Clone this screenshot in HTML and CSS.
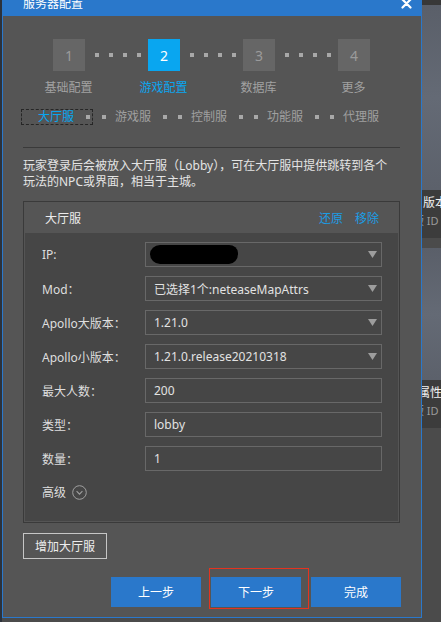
FILE: index.html
```html
<!DOCTYPE html>
<html lang="zh-CN">
<head>
<meta charset="utf-8">
<title>服务器配置</title>
<link rel="stylesheet" href="styles.css">
</head>
<body>
<div class="screen">
  <div class="left-edge"></div>
  <div class="dialog">
    <div class="titlebar">
      <span class="title">服务器配置</span>
      <svg class="close" width="11" height="11" viewBox="0 0 11 11"><path d="M1.5 1.5 L9.5 9.5 M9.5 1.5 L1.5 9.5" stroke="#fff" stroke-width="2.2" stroke-linecap="round"/></svg>
    </div>

    <div class="steps">
      <div class="sq">1</div>
      <div class="dots"><i></i><i></i><i></i><i></i></div>
      <div class="sq on">2</div>
      <div class="dots"><i></i><i></i><i></i><i></i></div>
      <div class="sq">3</div>
      <div class="dots"><i></i><i></i><i></i><i></i></div>
      <div class="sq">4</div>
    </div>
    <div class="step-labels">
      <span>基础配置</span>
      <span class="on">游戏配置</span>
      <span>数据库</span>
      <span>更多</span>
    </div>

    <div class="subs">
      <div class="sub-active"><span>大厅服</span><i class="d a"></i></div>
      <i class="d c"></i>
      <span class="st">游戏服</span><i class="d a"></i><i class="d b"></i>
      <span class="st">控制服</span><i class="d a"></i><i class="d b"></i>
      <span class="st">功能服</span><i class="d a"></i><i class="d b"></i>
      <span class="st">代理服</span>
    </div>

    <div class="sep"></div>

    <div class="content">
      <p class="desc">玩家登录后会被放入大厅服（Lobby），可在大厅服中提供跳转到各个玩法的NPC或界面，相当于主城。</p>

      <div class="panel">
        <div class="panel-head">
          <span>大厅服</span>
          <div class="links"><span>还原</span><span>移除</span></div>
        </div>
        <div class="panel-body">
          <div class="row"><span class="lab">IP:</span><div class="field"><span class="redact"></span><svg class="arrow" width="9" height="7" viewBox="0 0 9 7"><path d="M0 0 H9 L4.5 7 Z" fill="#9d9d9d"/></svg></div></div>
          <div class="row"><span class="lab">Mod：</span><div class="field"><span>已选择1个:neteaseMapAttrs</span><svg class="arrow" width="9" height="7" viewBox="0 0 9 7"><path d="M0 0 H9 L4.5 7 Z" fill="#9d9d9d"/></svg></div></div>
          <div class="row"><span class="lab">Apollo大版本：</span><div class="field"><span>1.21.0</span><svg class="arrow" width="9" height="7" viewBox="0 0 9 7"><path d="M0 0 H9 L4.5 7 Z" fill="#9d9d9d"/></svg></div></div>
          <div class="row"><span class="lab">Apollo小版本：</span><div class="field"><span>1.21.0.release20210318</span><svg class="arrow" width="9" height="7" viewBox="0 0 9 7"><path d="M0 0 H9 L4.5 7 Z" fill="#9d9d9d"/></svg></div></div>
          <div class="row"><span class="lab">最大人数：</span><div class="field"><span>200</span></div></div>
          <div class="row"><span class="lab">类型：</span><div class="field"><span>lobby</span></div></div>
          <div class="row"><span class="lab">数量：</span><div class="field"><span>1</span></div></div>
          <div class="adv"><span>高级</span><svg width="15" height="15" viewBox="0 0 15 15"><circle cx="7.5" cy="7.5" r="6.8" fill="none" stroke="#a0a0a0" stroke-width="1"/><path d="M4.6 6.2 L7.5 9.1 L10.4 6.2" fill="none" stroke="#a0a0a0" stroke-width="1.1"/></svg></div>
        </div>
      </div>

      <div class="add">增加大厅服</div>

      <div class="footer">
        <div class="btn">上一步</div>
        <div class="btn next">下一步<span class="mark"></span></div>
        <div class="btn">完成</div>
      </div>
    </div>
  </div>
  <div class="right">
    <div class="r-top"></div>
    <div class="thumb t1"></div>
    <div class="band"><div class="bt">版本</div><div class="bi">版 ID 8</div></div>
    <div class="r-gap"></div>
    <div class="thumb t2"></div>
    <div class="band"><div class="bt b2">属性</div><div class="bi">版 ID 9</div></div>
  </div>
</div>
</body>
</html>
```

FILE: styles.css
```css
* { box-sizing: border-box; }
html, body { margin: 0; padding: 0; }
body {
  width: 441px;
  height: 622px;
  overflow: hidden;
  background: #4b4b4b;
  font-family: "Noto Sans", "Noto Sans CJK SC", sans-serif;
  font-size: 12px;
}
.screen {
  display: flex;
  align-items: flex-start;
  width: 441px;
  height: 622px;
  overflow: hidden;
}
.left-edge {
  width: 2px;
  height: 622px;
  flex: none;
  background: #2c323b;
}
.dialog {
  width: 420px;
  flex: none;
  margin-top: -14px;
  background: #555555;
  border: 1px solid #2a78cb;
  border-top: none;
  padding-bottom: 10px;
  display: flex;
  flex-direction: column;
}
.titlebar {
  height: 30px;
  margin: 0 -1px;
  background: #2a78cb;
  display: flex;
  align-items: flex-start;
  padding: 10px 10px 0 21px;
  color: #fff;
  line-height: 16px;
}
.title { font-size: 12px; }
.close { margin-left: auto; margin-top: 2px; }

.steps {
  display: flex;
  align-items: center;
  margin-top: 23px;
  padding-left: 50px;
}
.sq {
  width: 32px;
  height: 32px;
  flex: none;
  background: #666666;
  color: #9b9b9b;
  font-size: 14px;
  display: flex;
  align-items: center;
  justify-content: center;
}
.sq.on { background: #09a6f0; color: #fff; }
.dots {
  width: 63px;
  flex: none;
  display: flex;
  gap: 10px;
  padding-left: 10px;
}
.dots i { width: 4px; height: 4px; background: #a8a8a8; }

.step-labels {
  display: grid;
  grid-template-columns: repeat(4, 95px);
  padding-left: 18px;
  margin-top: 9px;
  line-height: 16px;
  color: #a2a2a2;
  text-align: center;
}
.step-labels .on { color: #09a6f0; }

.subs {
  display: flex;
  align-items: center;
  height: 16px;
  margin-top: 13px;
  padding-left: 18px;
  color: #a0a0a0;
  line-height: 14px;
}
.sub-active {
  display: flex;
  align-items: center;
  height: 16px;
  border: 1px dashed #262626;
  padding: 0 2px 0 16px;
  color: #09a6f0;
}
.d { width: 4px; height: 4px; flex: none; background: #a8a8a8; }
.d.a { margin-left: 12px; }
.d.b { margin-left: 11px; }
.d.c { margin-left: 9px; }
.st { margin-left: 9px; }

.sep {
  height: 1px;
  margin: 22px 21px 0 20px;
  background: #3a3a3a;
}

.content {
  padding: 0 21px 0 20px;
  display: flex;
  flex-direction: column;
}
.desc {
  margin: 10px 0 0;
  padding-right: 12px;
  line-height: 16px;
  color: #e4e4e4;
}
.panel {
  margin-top: 11px;
  border: 1px solid #3a3a3a;
  padding: 1px;
}
.panel-head {
  height: 30px;
  display: flex;
  align-items: center;
  padding: 0 19px 0 20px;
  color: #ececec;
}
.links {
  margin-left: auto;
  display: flex;
  gap: 12px;
  color: #1b9de6;
}
.panel-body {
  background: #464646;
  padding: 9px 16px 21px 17px;
  display: flex;
  flex-direction: column;
  gap: 9px;
}
.row {
  display: flex;
  align-items: center;
  height: 25px;
}
.lab {
  width: 103px;
  flex: none;
  color: #dedede;
}
.field {
  flex: 1;
  height: 25px;
  border: 1px solid #686868;
  display: flex;
  align-items: center;
  padding: 0 4px 0 8px;
  color: #e2e2e2;
}
.arrow { margin-left: auto; }
.redact {
  width: 88px;
  height: 19px;
  margin-left: -4px;
  background: #000;
  border-radius: 10px 9px 9px 10px / 9px 8px 10px 10px;
}
.adv {
  display: flex;
  align-items: center;
  height: 16px;
  margin-top: 4px;
  color: #dedede;
}
.adv svg { margin-left: 6px; }

.add {
  margin-top: 10px;
  align-self: flex-start;
  width: 84px;
  height: 26px;
  border: 1px solid #c6c6c6;
  color: #ededed;
  display: flex;
  align-items: center;
  justify-content: center;
}
.footer {
  margin-top: 18px;
  margin-right: -1px;
  display: flex;
  justify-content: flex-end;
  gap: 10px;
}
.btn {
  width: 90px;
  height: 30px;
  background: #2a78cb;
  color: #fff;
  display: flex;
  align-items: center;
  justify-content: center;
}
.next { position: relative; }
.mark {
  position: absolute;
  left: -2px;
  top: -9px;
  width: 100px;
  height: 41px;
  border: 1px solid #e5331f;
}

.right {
  width: 19px;
  flex: none;
  height: 622px;
  overflow: hidden;
  background: #4b4b4b;
  display: flex;
  flex-direction: column;
}
.r-top { height: 5px; background: #383838; flex: none; }
.thumb { flex: none; background: linear-gradient(180deg, #5a5f69, #646a75 50%, #5c616b); }
.t1 { height: 185px; }
.t2 { height: 132px; }
.r-gap { height: 10px; flex: none; background: #4b4b4b; }
.band {
  height: 48px;
  flex: none;
  background: #3c3c3c;
  padding-top: 5px;
  white-space: nowrap;
}
.bt { color: #f2f2f2; line-height: 16px; margin-left: 1px; font-size: 12px; }
.bt.b2 { margin-left: -4px; }
.bi { color: #9a9a9a; line-height: 16px; margin-top: 2px; margin-left: -9px; font-size: 11px; }
```
